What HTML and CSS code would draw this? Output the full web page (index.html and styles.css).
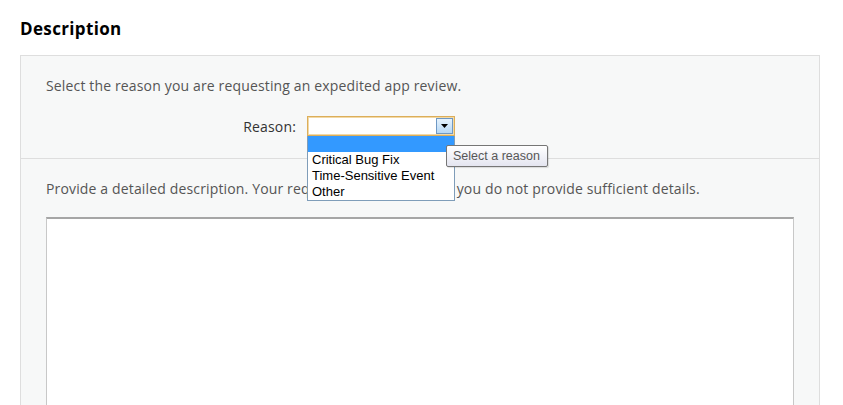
FILE: index.html
```html
<!DOCTYPE html>
<html>
<head>
<meta charset="utf-8">
<link rel="stylesheet" href="styles.css">
</head>
<body>
<h2 class="title">Description</h2>
<div class="panel">
  <div class="section top">
    <p class="note">Select the reason you are requesting an expedited app review.</p>
    <div class="row">
      <label class="label">Reason:</label>
      <div class="select-wrap">
        <div class="select">
          <span class="select-value"></span>
          <span class="arrow-btn"><svg width="7" height="4" viewBox="0 0 7 4"><path d="M0 0H7L3.5 4Z" fill="#000"/></svg></span>
        </div>
        <ul class="dropdown">
          <li class="opt selected">&nbsp;</li>
          <li class="opt">Critical Bug Fix</li>
          <li class="opt">Time-Sensitive Event</li>
          <li class="opt">Other</li>
        </ul>
        <div class="tooltip">Select a reason</div>
      </div>
    </div>
  </div>
  <div class="section bottom">
    <p class="note">Provide a detailed description. Your request may be denied if you do not provide sufficient details.</p>
    <div class="textarea"></div>
  </div>
</div>
</body>
</html>
```
FILE: styles.css
```css
html, body {
  margin: 0;
  padding: 0;
  background: #fff;
}
body {
  padding: 18px 23px 0 20px;
  font-family: "Open Sans", sans-serif;
  overflow: hidden;
  height: 405px;
  box-sizing: border-box;
}
.title {
  margin: 0;
  font-size: 17px;
  letter-spacing: 0.35px;
  font-weight: 700;
  color: #000;
  line-height: 22px;
  height: 37px;
}
.panel {
  border: 1px solid #dedede;
  background: #f7f8f8;
}
.section.top {
  padding: 19px 25px 22px 25px;
}
.section.bottom {
  border-top: 1px solid #dedede;
  padding: 19px 25px 0 25px;
  height: 400px;
}
.note {
  margin: 0;
  font-size: 14px;
  letter-spacing: 0.15px;
  line-height: 22px;
  color: #555;
}
.row {
  display: flex;
  align-items: center;
  margin-top: 19px;
}
.label {
  width: 250px;
  padding-right: 11px;
  text-align: right;
  font-size: 14px;
  letter-spacing: 0.15px;
  color: #333;
}
.select-wrap {
  position: relative;
}
.select {
  width: 148px;
  height: 20px;
  box-sizing: border-box;
  border: 1px solid #dcae5a;
  box-shadow: inset 0 0 0 1px #f2d9a6;
  background: #fff;
  display: flex;
  justify-content: flex-end;
  padding: 1px;
}
.arrow-btn {
  width: 17px;
  height: 16px;
  box-sizing: border-box;
  border: 1px solid #6e98c4;
  background: linear-gradient(#e6f2fc, #b6d8f6);
  display: flex;
  align-items: center;
  justify-content: center;
}
.dropdown {
  position: absolute;
  left: 0;
  top: 20px;
  width: 148px;
  margin: 0;
  padding: 0;
  list-style: none;
  box-sizing: border-box;
  border: 1px solid #7f9db9;
  border-top: none;
  background: #fff;
  font-family: "Liberation Sans", Arial, sans-serif;
  font-size: 13px;
  color: #000;
  z-index: 2;
}
.opt {
  height: 16px;
  line-height: 16px;
  padding-left: 4px;
}
.opt.selected {
  background: #3399ff;
}
.tooltip {
  position: absolute;
  left: 139px;
  top: 29px;
  width: 102px;
  height: 22px;
  box-sizing: border-box;
  border: 1px solid #767676;
  border-radius: 2px;
  background: linear-gradient(#ffffff, #e4e5f0);
  font-family: "Liberation Sans", Arial, sans-serif;
  font-size: 12.5px;
  line-height: 20px;
  color: #575757;
  padding-left: 6px;
  white-space: nowrap;
  z-index: 3;
  box-shadow: 1px 1px 1px rgba(0,0,0,0.12);
}
.textarea {
  margin-top: 17px;
  height: 300px;
  border: 1px solid #c8c8c8;
  border-top: 2px solid #a6a6a6;
  background: #fff;
}
```
